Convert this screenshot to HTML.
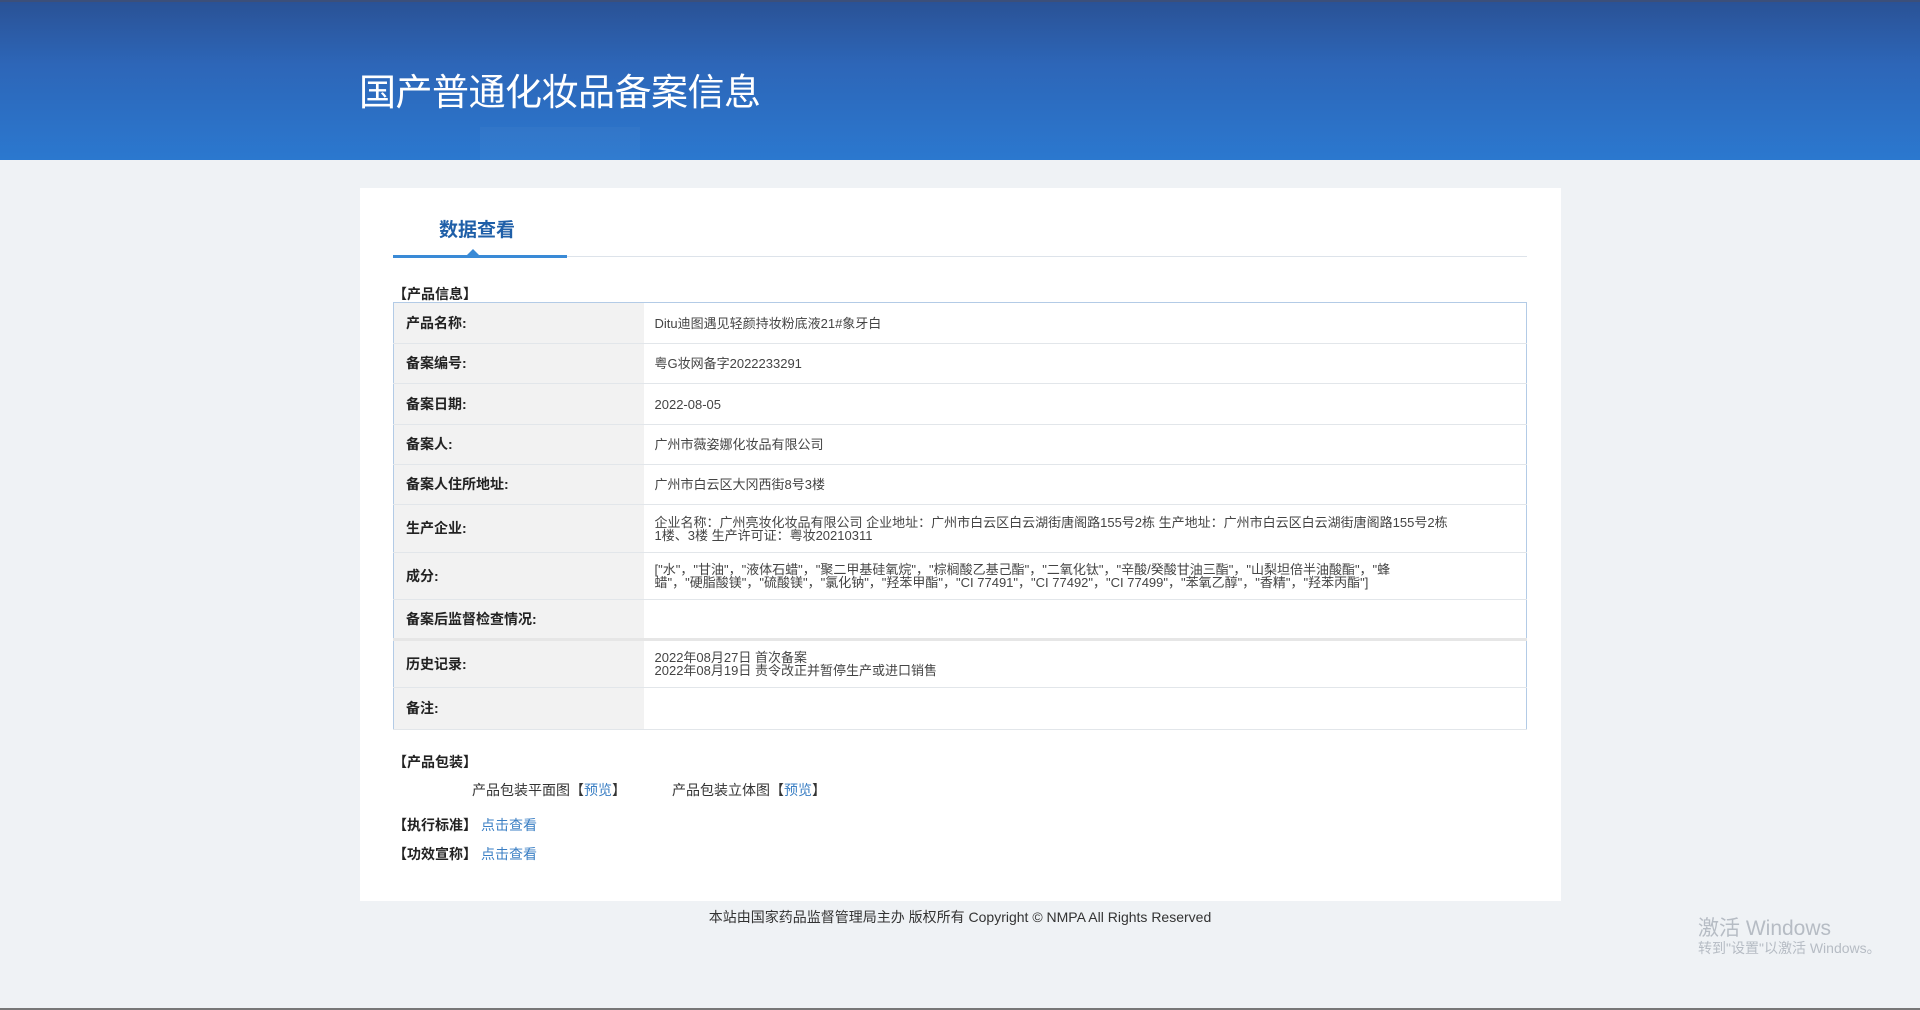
<!DOCTYPE html>
<html><head><meta charset="utf-8"><style>
*{margin:0;padding:0;box-sizing:border-box}
body{width:1920px;height:1010px;background:#eff2f5;font-family:"Liberation Sans","Noto Sans CJK SC",sans-serif;position:relative;overflow:hidden;color:#333}
.hdr{position:absolute;left:0;top:0;width:1920px;height:160px;background:linear-gradient(180deg,#2a5296 0%,#2d66b8 40%,#2b78cf 100%);border-top:2px solid #3c4f7a}
.hdr .b{position:absolute;left:480px;top:125px;width:160px;height:35px;background:rgba(255,255,255,.03)}
.hdr h1{position:absolute;left:359px;top:60px;font-size:37px;font-weight:normal;color:#fff;letter-spacing:-0.5px}
.panel{position:absolute;left:360px;top:188px;width:1201px;height:713px;background:#fff}
.abs{position:absolute}
.tab{left:439px;top:215px;font-size:19px;font-weight:bold;color:#1f5fa8}
.line{left:393px;top:256px;width:1134px;height:1px;background:#dde3ea}
.tabl{left:393px;top:255px;width:174px;height:3px;background:#3a8ad6}
.tri{left:467px;top:249px;width:0;height:0;border-left:6px solid transparent;border-right:6px solid transparent;border-bottom:6px solid #3a8ad6}
.sec{font-size:14px;font-weight:bold;color:#222}
table{position:absolute;left:393px;top:302px;width:1134px;border-collapse:collapse;border:1px solid #b3cbe6}
td{border-bottom:1px solid #e2e6ea;font-size:13px;vertical-align:middle;line-height:13px}
td.l{width:250px;background:#f2f2f2;font-weight:bold;font-size:14px;color:#222;padding-left:12px}
td.v{padding-left:11px;color:#444}
a{color:#3b7fc4;text-decoration:none}
.foot{left:0;width:1920px;top:907px;text-align:center;font-size:14px;color:#333}
.wm1{left:1698px;top:912px;font-size:21px;color:#b6bcc4}
.wm2{left:1698px;top:938px;font-size:14px;color:#b6bcc4}
.bot{left:0;top:1008px;width:1920px;height:2px;background:#777}
</style></head><body>
<div class="hdr"><div class="b"></div><h1>国产普通化妆品备案信息</h1></div>
<div class="panel"></div>
<div class="abs tab">数据查看</div>
<div class="abs line"></div>
<div class="abs tabl"></div>
<div class="abs tri"></div>
<div class="abs sec" style="left:393px;top:284px">【产品信息】</div>
<table>
<tr style="height:41px"><td class="l">产品名称:</td><td class="v">Ditu迪图遇见轻颜持妆粉底液21#象牙白</td></tr>
<tr style="height:40px"><td class="l">备案编号:</td><td class="v">粤G妆网备字2022233291</td></tr>
<tr style="height:41px"><td class="l">备案日期:</td><td class="v">2022-08-05</td></tr>
<tr style="height:40px"><td class="l">备案人:</td><td class="v">广州市薇姿娜化妆品有限公司</td></tr>
<tr style="height:40px"><td class="l">备案人住所地址:</td><td class="v">广州市白云区大冈西街8号3楼</td></tr>
<tr style="height:48px"><td class="l">生产企业:</td><td class="v">企业名称：广州亮妆化妆品有限公司 企业地址：广州市白云区白云湖街唐阁路155号2栋 生产地址：广州市白云区白云湖街唐阁路155号2栋<br>1楼、3楼 生产许可证：粤妆20210311</td></tr>
<tr style="height:47px"><td class="l">成分:</td><td class="v">["水"，"甘油"，"液体石蜡"，"聚二甲基硅氧烷"，"棕榈酸乙基己酯"，"二氧化钛"，"辛酸/癸酸甘油三酯"，"山梨坦倍半油酸酯"，"蜂<br>蜡"，"硬脂酸镁"，"硫酸镁"，"氯化钠"，"羟苯甲酯"，"CI 77491"，"CI 77492"，"CI 77499"，"苯氧乙醇"，"香精"，"羟苯丙酯"]</td></tr>
<tr style="height:40px"><td class="l" style="border-bottom:3px solid #e6e6e6">备案后监督检查情况:</td><td class="v" style="border-bottom:3px solid #e6e6e6"></td></tr>
<tr style="height:48px"><td class="l">历史记录:</td><td class="v">2022年08月27日 首次备案<br>2022年08月19日 责令改正并暂停生产或进口销售</td></tr>
<tr style="height:42px"><td class="l">备注:</td><td class="v"></td></tr>
</table>
<div class="abs sec" style="left:393px;top:752px">【产品包装】</div>
<div class="abs" style="left:472px;top:780px;font-size:14px">产品包装平面图【<a>预览</a>】</div>
<div class="abs" style="left:672px;top:780px;font-size:14px">产品包装立体图【<a>预览</a>】</div>
<div class="abs sec" style="left:393px;top:815px">【执行标准】<a style="font-weight:normal;margin-left:4px">点击查看</a></div>
<div class="abs sec" style="left:393px;top:844px">【功效宣称】<a style="font-weight:normal;margin-left:4px">点击查看</a></div>
<div class="abs foot">本站由国家药品监督管理局主办 版权所有 Copyright © NMPA All Rights Reserved</div>
<div class="abs wm1">激活 Windows</div>
<div class="abs wm2">转到"设置"以激活 Windows。</div>
<div class="abs bot"></div>
</body></html>
